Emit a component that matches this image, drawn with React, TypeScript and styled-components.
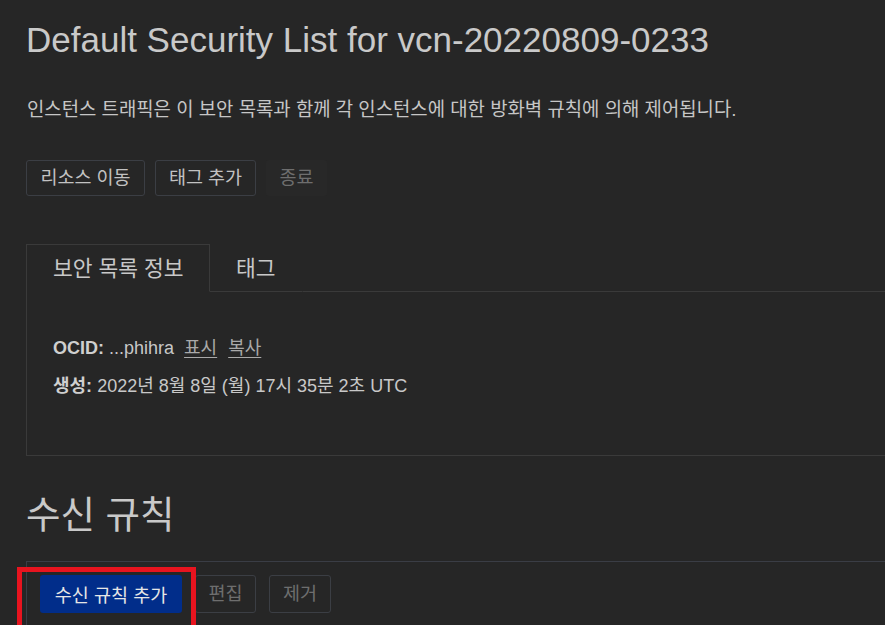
import React from "react";
import styled, { createGlobalStyle } from "styled-components";

const Global = createGlobalStyle`
  html, body {
    margin: 0;
    padding: 0;
    background: #262626;
    overflow: hidden;
  }
  body {
    font-family: "Liberation Sans", "Noto Sans CJK KR", Arial, sans-serif;
    color: #c8c8c8;
  }
`;

const Page = styled.div`
  width: 885px;
  height: 625px;
  overflow: hidden;
  padding: 19px 0 0 26px;
  box-sizing: border-box;
`;

const Title = styled.h1`
  margin: 0;
  font-size: 35px;
  line-height: 41px;
  font-weight: 400;
  color: #c9c9c9;
  white-space: nowrap;
`;

const Description = styled.p`
  margin: 38px 0 0 1px;
  font-size: 18.85px;
  line-height: 24px;
  color: #c6c6c6;
  white-space: nowrap;
`;

const ButtonRow = styled.div<{ $gap: number }>`
  display: flex;
  gap: ${(p) => p.$gap}px;
`;

const TopActions = styled(ButtonRow)`
  margin-top: 38px;
`;

const Button = styled.button<{ $w: number; $h: number; $disabled?: boolean }>`
  box-sizing: border-box;
  width: ${(p) => p.$w}px;
  height: ${(p) => p.$h}px;
  padding: 0;
  border-radius: 3px;
  border: 1px solid ${(p) => (p.$disabled ? "transparent" : "#3b3e44")};
  background: ${(p) => (p.$disabled ? "#282828" : "transparent")};
  color: ${(p) => (p.$disabled ? "#6e6e6e" : "#c2c2c2")};
  font-family: "Liberation Sans", "Noto Sans CJK KR", sans-serif;
  font-size: 18.5px;
  line-height: 20px;
  cursor: pointer;
`;

const OutlineButton = styled(Button)<{ $muted?: boolean }>`
  color: ${(p) => (p.$muted ? "#6e6e6e" : "#c2c2c2")};
  background: transparent;
  border-color: #3b3e44;
`;

const PrimaryButton = styled.button`
  box-sizing: border-box;
  width: 142px;
  height: 38px;
  padding: 0;
  border: none;
  border-radius: 3px;
  background: #012d8a;
  color: #e6e6e6;
  font-family: "Liberation Sans", "Noto Sans CJK KR", sans-serif;
  font-size: 18.5px;
  cursor: pointer;
`;

const Panel = styled.section`
  margin-top: 48px;
  width: 900px;
  border-left: 1px solid #3a3a3a;
  border-bottom: 1px solid #3a3a3a;
`;

const TabRow = styled.div`
  display: flex;
  height: 48px;
`;

const Tab = styled.div<{ $active?: boolean }>`
  box-sizing: border-box;
  display: flex;
  align-items: center;
  padding-left: 26px;
  width: ${(p) => (p.$active ? "183px" : "auto")};
  padding-right: ${(p) => (p.$active ? 0 : 26)}px;
  border-top: 1px solid ${(p) => (p.$active ? "#3a3a3a" : "transparent")};
  border-right: 1px solid ${(p) => (p.$active ? "#3a3a3a" : "transparent")};
  border-bottom: 1px solid ${(p) => (p.$active ? "transparent" : "#3a3a3a")};
  font-size: 21.5px;
  color: #c8c8c8;
  white-space: nowrap;
  padding-bottom: 4px;
`;

const TabFiller = styled.div`
  flex: 1;
  border-bottom: 1px solid #3a3a3a;
`;

const PanelBody = styled.div`
  display: flex;
  flex-direction: column;
  gap: 14px;
  padding: 44px 0 57px 26px;
`;

const InfoRow = styled.div`
  font-size: 18px;
  line-height: 24px;
  color: #c8c8c8;
  white-space: nowrap;
`;

const Label = styled.b`
  font-weight: 700;
  color: #cfcfcf;
`;

const Link = styled.a<{ $space: number }>`
  color: #a9a9a9;
  text-decoration: underline;
  text-underline-offset: 3px;
  margin-left: ${(p) => p.$space}px;
  cursor: pointer;
`;

const SectionTitle = styled.h2`
  margin: 34px 0 0 0;
  font-size: 37.5px;
  line-height: 50px;
  font-weight: 400;
  color: #c9c9c9;
`;

const Toolbar = styled.div`
  position: relative;
  margin-top: 21px;
  padding: 13px 0 20px 13px;
  border-top: 1px solid #3a3d45;
  border-left: 1px solid #3a3d45;
`;

const Highlight = styled.div`
  position: absolute;
  left: -10px;
  top: 5px;
  width: 179px;
  height: 80px;
  box-sizing: border-box;
  border: 5px solid #e8141f;
  pointer-events: none;
`;

export default function App() {
  return (
    <>
      <Global />
      <Page>
        <Title>Default Security List for vcn-20220809-0233</Title>
        <Description>
          인스턴스 트래픽은 이 보안 목록과 함께 각 인스턴스에 대한 방화벽 규칙에 의해 제어됩니다.
        </Description>
        <TopActions $gap={10}>
          <Button $w={119} $h={36}>리소스 이동</Button>
          <Button $w={101} $h={36}>태그 추가</Button>
          <Button $w={61} $h={36} $disabled>종료</Button>
        </TopActions>

        <Panel>
          <TabRow>
            <Tab $active>보안 목록 정보</Tab>
            <Tab>태그</Tab>
            <TabFiller />
          </TabRow>
          <PanelBody>
            <InfoRow>
              <Label>OCID:</Label> ...phihra<Link $space={10}>표시</Link>
              <Link $space={11}>복사</Link>
            </InfoRow>
            <InfoRow>
              <Label>생성:</Label> 2022년 8월 8일 (월) 17시 35분 2초 UTC
            </InfoRow>
          </PanelBody>
        </Panel>

        <SectionTitle>수신 규칙</SectionTitle>
        <Toolbar>
          <ButtonRow $gap={13}>
            <PrimaryButton>수신 규칙 추가</PrimaryButton>
            <OutlineButton $w={61} $h={38} $muted>편집</OutlineButton>
            <OutlineButton $w={62} $h={38} $muted>제거</OutlineButton>
          </ButtonRow>
          <Highlight />
        </Toolbar>
      </Page>
    </>
  );
}
